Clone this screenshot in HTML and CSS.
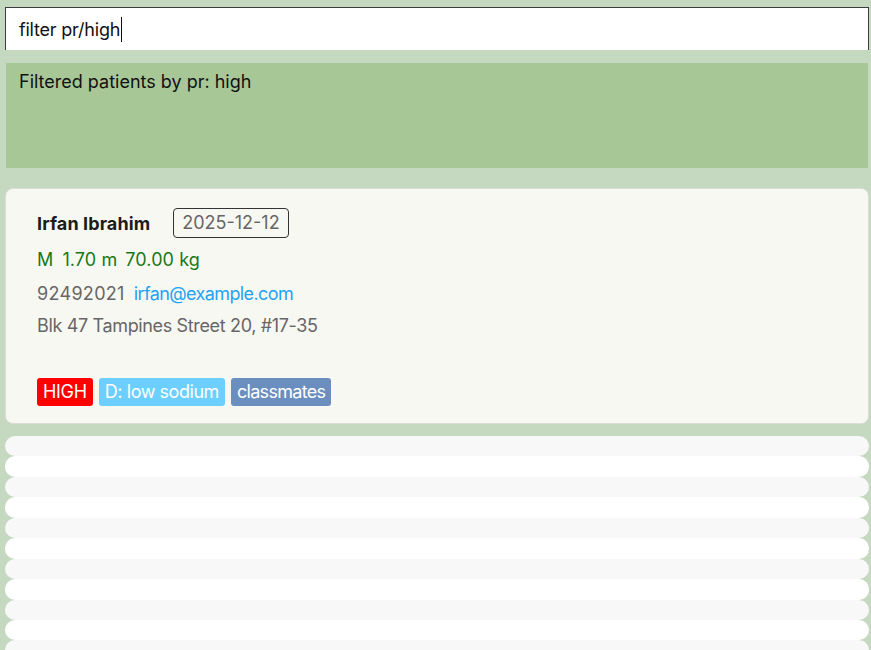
FILE: index.html
```html
<!DOCTYPE html>
<html>
<head>
<meta charset="utf-8">
<link rel="stylesheet" href="styles.css">
</head>
<body>
<div class="app">
  <div class="command">
    <span class="command-text">filter pr/high</span><span class="caret"></span>
  </div>
  <div class="result">Filtered patients by pr: high</div>
  <div class="card">
    <div class="name-row">
      <span class="name">Irfan Ibrahim</span>
      <span class="date">2025-12-12</span>
    </div>
    <div class="vitals"><span>M</span><span>1.70 m</span><span>70.00 kg</span></div>
    <div class="contact"><span class="phone">92492021</span><span class="email">irfan@example.com</span></div>
    <div class="address">Blk 47 Tampines Street 20, #17-35</div>
    <div class="tags">
      <span class="tag tag-high">HIGH</span>
      <span class="tag tag-diet">D: low sodium</span>
      <span class="tag tag-group">classmates</span>
    </div>
  </div>
  <ul class="rows">
    <li class="row"></li><li class="row"></li><li class="row"></li><li class="row"></li>
    <li class="row"></li><li class="row"></li><li class="row"></li><li class="row"></li>
    <li class="row"></li><li class="row"></li><li class="row"></li>
  </ul>
</div>
</body>
</html>
```

FILE: styles.css
```css
html, body {
  margin: 0;
  padding: 0;
  background: #c5d9c0;
  font-family: Inter, "Noto Sans", sans-serif;
  overflow: hidden;
  height: 650px;
}
.app {
  padding: 7px 2px 0 5px;
  display: flex;
  flex-direction: column;
}
.command {
  height: 42px;
  background: #fff;
  border: 1px solid #3c3c3c;
  border-bottom: none;
  display: flex;
  align-items: center;
  padding-left: 13px;
  font-size: 18px;
  color: #111;
  letter-spacing: -0.2px;
}
.caret {
  display: inline-block;
  width: 1px;
  height: 25px;
  background: #111;
  margin-left: 1px;
}
.result {
  margin: 13px 1px 0 1px;
  height: 105px;
  box-sizing: border-box;
  background: #a8c797;
  padding: 8px 13px;
  font-size: 18px;
  line-height: 22px;
  color: #111;
}
.card {
  margin-top: 20px;
  height: 236px;
  box-sizing: border-box;
  background: #f8f8f3;
  border: 1px solid #dcdcd8;
  border-radius: 8px;
  padding: 19px 30px 0 31px;
  font-size: 18px;
}
.name-row {
  display: flex;
  align-items: center;
  gap: 23px;
  height: 30px;
}
.name {
  font-weight: 700;
  color: #1c1c1c;
  letter-spacing: 0.1px;
}
.date {
  border: 1px solid #333;
  border-radius: 4px;
  padding: 0 8px;
  height: 28px;
  line-height: 28px;
  color: #666;
}
.vitals {
  margin-top: 7px;
  height: 33px;
  line-height: 30px;
  color: #177817;
  display: flex;
  gap: 8px;
  letter-spacing: 0.1px;
}
.vitals span:first-child {
  margin-right: 1px;
}
.contact {
  height: 32px;
  line-height: 32px;
  display: flex;
  gap: 9px;
}
.phone { color: #666; letter-spacing: 0.3px; }
.email { color: #1fa3f2; letter-spacing: -0.6px; }
.address {
  height: 32px;
  line-height: 32px;
  color: #666;
  letter-spacing: -0.35px;
}
.tags {
  margin-top: 36px;
  display: flex;
  gap: 6px;
}
.tag {
  height: 28px;
  line-height: 28px;
  padding: 0 6px;
  border-radius: 3px;
  color: #fff;
}
.tag-high { background: #ff0000; letter-spacing: -0.3px; }
.tag-diet { background: #6ccfff; letter-spacing: -0.45px; }
.tag-group { background: #6a8fbe; letter-spacing: -0.7px; }
.rows {
  list-style: none;
  margin: 12px 0 0 0;
  padding: 0;
}
.row {
  height: 20.45px;
  border-radius: 10px;
  background: #f8f8f8;
}
.row:nth-child(even) {
  background: #fff;
}
```
